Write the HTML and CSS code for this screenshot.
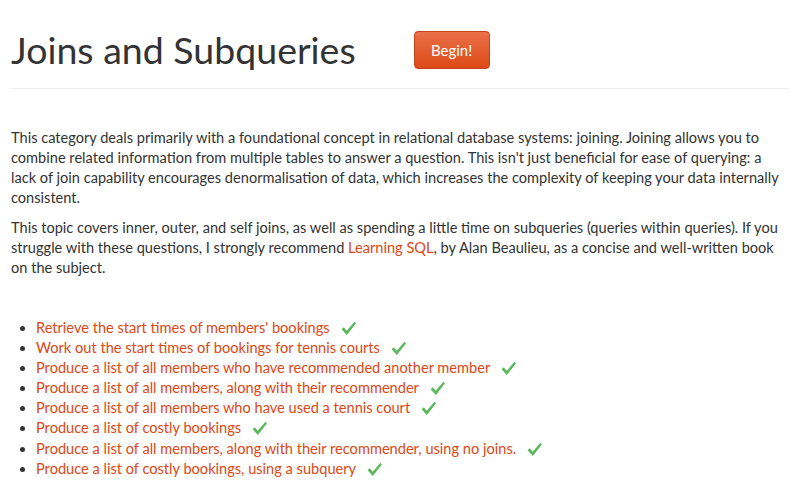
FILE: index.html
```html
<!DOCTYPE html>
<html>
<head>
<meta charset="utf-8">
<link rel="stylesheet" href="styles.css">
</head>
<body>
<div class="page">
  <div class="header">
    <h1 class="title">Joins and Subqueries</h1>
    <a class="btn-begin" href="#">Begin!</a>
  </div>
  <div class="intro">
    <p>This category deals primarily with a foundational concept in relational database systems: joining. Joining allows you to combine related information from multiple tables to answer a question. This isn't just beneficial for ease of querying: a lack of join capability encourages denormalisation of data, which increases the complexity of keeping your data internally consistent.</p>
    <p>This topic covers inner, outer, and self joins, as well as spending a little time on subqueries (queries within queries). If you struggle with these questions, I strongly recommend <a href="#">Learning SQL</a>, by Alan Beaulieu, as a concise and well-written book on the subject.</p>
  </div>
  <ul class="questions">
    <li><a href="#">Retrieve the start times of members' bookings</a><svg class="check" viewBox="0 0 16 16"><path d="M1.5 8.6 L3.6 6.9 L6.3 10.2 L13.6 1.6 L15 3.2 L6.4 14.2 Z"/></svg></li>
    <li><a href="#">Work out the start times of bookings for tennis courts</a><svg class="check" viewBox="0 0 16 16"><path d="M1.5 8.6 L3.6 6.9 L6.3 10.2 L13.6 1.6 L15 3.2 L6.4 14.2 Z"/></svg></li>
    <li><a href="#">Produce a list of all members who have recommended another member</a><svg class="check" viewBox="0 0 16 16"><path d="M1.5 8.6 L3.6 6.9 L6.3 10.2 L13.6 1.6 L15 3.2 L6.4 14.2 Z"/></svg></li>
    <li><a href="#">Produce a list of all members, along with their recommender</a><svg class="check" viewBox="0 0 16 16"><path d="M1.5 8.6 L3.6 6.9 L6.3 10.2 L13.6 1.6 L15 3.2 L6.4 14.2 Z"/></svg></li>
    <li><a href="#">Produce a list of all members who have used a tennis court</a><svg class="check" viewBox="0 0 16 16"><path d="M1.5 8.6 L3.6 6.9 L6.3 10.2 L13.6 1.6 L15 3.2 L6.4 14.2 Z"/></svg></li>
    <li><a href="#">Produce a list of costly bookings</a><svg class="check" viewBox="0 0 16 16"><path d="M1.5 8.6 L3.6 6.9 L6.3 10.2 L13.6 1.6 L15 3.2 L6.4 14.2 Z"/></svg></li>
    <li><a href="#">Produce a list of all members, along with their recommender, using no joins.</a><svg class="check" viewBox="0 0 16 16"><path d="M1.5 8.6 L3.6 6.9 L6.3 10.2 L13.6 1.6 L15 3.2 L6.4 14.2 Z"/></svg></li>
    <li><a href="#">Produce a list of costly bookings, using a subquery</a><svg class="check" viewBox="0 0 16 16"><path d="M1.5 8.6 L3.6 6.9 L6.3 10.2 L13.6 1.6 L15 3.2 L6.4 14.2 Z"/></svg></li>
  </ul>
</div>
</body>
</html>
```
FILE: styles.css
```css
html, body {
  margin: 0;
  padding: 0;
  background: #ffffff;
}
body {
  font-family: "Lato", "Open Sans", sans-serif;
  font-size: 14.6px;
  line-height: 20px;
  color: #333333;
}
a {
  color: #dd4814;
  text-decoration: none;
}
.page {
  padding-left: 11px;
  width: 778px;
}
.header {
  display: flex;
  align-items: center;
  height: 89px;
  border-bottom: 1px solid #eeeeee;
  box-sizing: border-box;
  padding-top: 11px;
}
.title {
  margin: 0;
  font-size: 37.5px;
  font-weight: 400;
  line-height: 48px;
  color: #333333;
}
.btn-begin {
  margin-left: 58px;
  width: 76px;
  height: 38px;
  box-sizing: border-box;
  display: flex;
  align-items: center;
  justify-content: center;
  color: #ffffff;
  font-size: 15px;
  border-radius: 4px;
  border: 1px solid #c8431a;
  background: linear-gradient(#eb6f48, #dc4a17);
}
.intro {
  padding-top: 39px;
}
.intro p {
  margin: 0 0 10px 0;
}
.questions {
  margin: 40px 0 0 0;
  padding-left: 25px;
}
.questions li {
  line-height: 20.1px;
}
.check {
  width: 17px;
  height: 17px;
  fill: #5cb85c;
  margin-left: 10px;
  vertical-align: -4px;
}
```
